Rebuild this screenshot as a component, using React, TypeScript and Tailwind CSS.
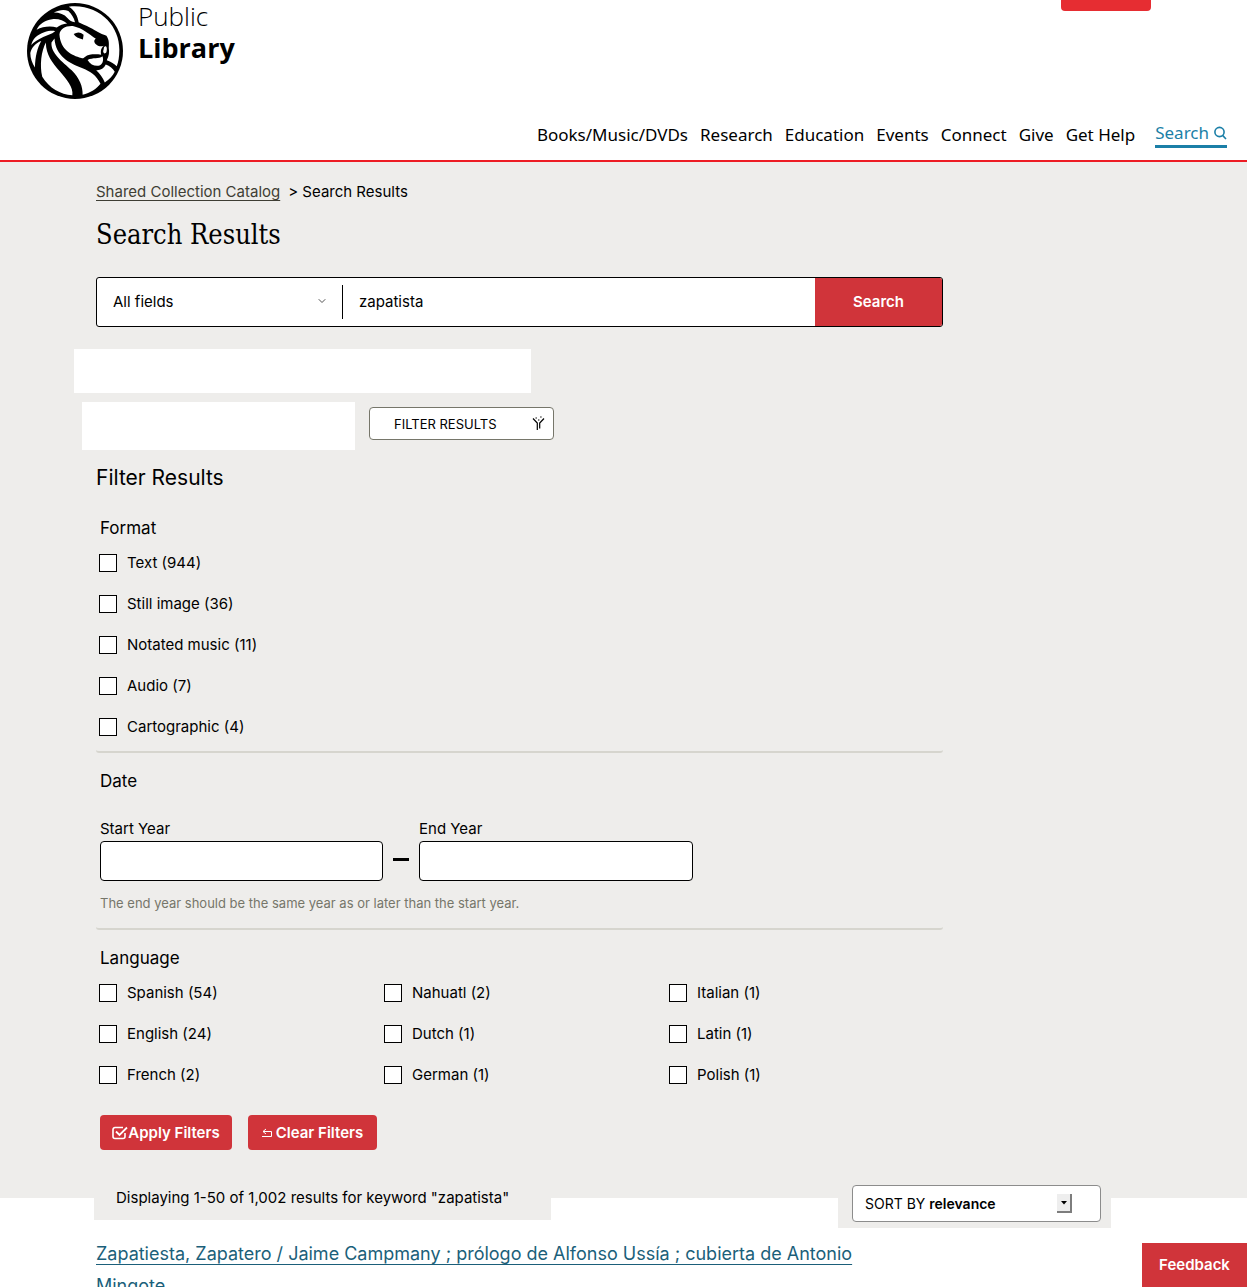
import React from "react";
import { ChevronDown } from "lucide-react";

const navItems = ["Books/Music/DVDs", "Research", "Education", "Events", "Connect", "Give", "Get Help"];
const formats = ["Text (944)", "Still image (36)", "Notated music (11)", "Audio (7)", "Cartographic (4)"];
const languages = [
  ["Spanish (54)", "English (24)", "French (2)"],
  ["Nahuatl (2)", "Dutch (1)", "German (1)"],
  ["Italian (1)", "Latin (1)", "Polish (1)"],
];

function LionLogo() {
  return (
    <svg viewBox="81 9 290 290" className="h-24 w-24 shrink-0" role="img" aria-label="Lion logo">
      <circle cx="226" cy="154" r="145" fill="#000" />
      <g fill="#fff">
        <path d="M207 20C300 10 361 80 360 150C360 172 357 188 352 200C345 193 335 187 322 182C329 168 330 158 328 145C329 130 329 120 321 108C300 101 290 93 272 84C258 76 247 72 237 67C234 48 225 30 207 20Z" />
        <path d="M162 38C178 30 192 28 206 33C216 42 223 54 226 67C216 66 210 62 203 54C194 44 180 38 162 38Z" />
        <path d="M110 90C118 72 135 61 157 58C176 56 192 62 202 71C190 72 180 77 171 83C152 78 128 80 110 90Z" />
        <path d="M94 136C97 118 112 104 133 97C146 93 158 92 166 94C155 104 142 105 130 112C114 120 100 128 94 136Z" />
        <path d="M91 160C95 144 107 130 124 124C112 145 106 170 105 204C97 192 91 176 91 160Z" />
        <path d="M138 128C124 155 119 195 127 232C148 266 182 286 218 288C222 262 200 240 180 215C158 190 138 165 138 128Z" />
        <path d="M155 128C152 160 187 185 216 212C240 236 250 262 249 286C272 281 292 268 303 253C292 228 272 215 247 205C208 190 168 170 164 116Z" />
        <path d="M179 104C181 87 198 77 222 79C248 85 268 102 289 117C282 121 283 129 291 135C298 141 306 141 313 138C304 145 303 155 305 165C290 164 268 162 256 172C251 176 250 177 245 175C216 167 182 150 179 104Z" />
        <path d="M314 142C321 135 324 145 321 157C317 164 312 162 311 155Z" />
        <path d="M264 181C280 173 298 179 309 170C314 182 308 196 300 198C286 201 272 195 264 181Z" />
        <path d="M319 195C331 199 341 207 346 217C340 230 330 240 316 249C310 235 302 222 290 212C303 213 313 207 319 195Z" />
      </g>
      <path d="M222 103Q238 93 252 105L250 119Q230 116 222 103Z" fill="#000" />
    </svg>
  );
}

function SearchGlyph() {
  return (
    <svg viewBox="0 0 14 14" className="h-3.5 w-3.5" fill="none" stroke="currentColor" strokeWidth="1.6" aria-hidden="true">
      <circle cx="6.5" cy="6" r="4.6" />
      <path d="M9.6 9.4L13 13" />
    </svg>
  );
}

function FilterGlyph() {
  return (
    <svg viewBox="0 0 13 15" className="h-[15px] w-[13px]" fill="none" stroke="#000" strokeWidth="1.2" aria-hidden="true">
      <path d="M1 2.5L5.3 7V14M12 2.5L7.7 7V12.5" />
      <path d="M3.5 2h1.4M8.2 1h1.4M6 4h1.4" />
    </svg>
  );
}

function CheckGlyph() {
  return (
    <svg viewBox="0 0 16 14" className="h-3.5 w-4" fill="none" stroke="#fff" strokeWidth="1.6" aria-hidden="true">
      <path d="M11 1.5H3A2 2 0 0 0 1 3.500V10.500A2 2 0 0 0 3 12.500H11A2 2 0 0 0 13 10.500V7" />
      <path d="M4 5.500L7.500 9L15 1.500" strokeWidth="1.8" />
    </svg>
  );
}

function UndoGlyph() {
  return (
    <svg viewBox="0 0 10 10" className="h-2.5 w-2.5" fill="none" stroke="#fff" strokeWidth="1" aria-hidden="true">
      <path d="M4 1L1 3.500L4 6M1 3.500H9.500V8.500H0" />
    </svg>
  );
}

function CheckItem({ label }: { label: string }) {
  return (
    <label className="flex h-[41px] items-center gap-2.5">
      <input type="checkbox" className="h-[18px] w-[18px] appearance-none border border-black bg-white checked:bg-black" />
      {label}
    </label>
  );
}

export default function App() {
  return (
    <div className="min-h-screen bg-white font-[Inter,sans-serif] text-[15px] leading-6 text-black">
      <header className="flex h-[162px] flex-col justify-between border-b-2 border-[#ed1c24]">
        <div className="flex items-start justify-between pl-[27px] pr-24">
          <a href="#" className="flex gap-[15px] font-['Open_Sans',sans-serif] leading-8">
            <span className="pt-[3px]"><LionLogo /></span>
            <span className="flex flex-col">
              <span className="text-[26px] leading-8 font-light">Public</span>
              <span className="text-[27px] leading-8 font-bold">Library</span>
            </span>
          </a>
          <div className="h-[11px] w-[90px] rounded-b-[4px] bg-[#e62d32]" />
        </div>
        <nav className="flex items-center justify-end gap-3 pb-3 pr-5 font-['Noto_Sans',sans-serif] text-[17px] leading-6">
          {navItems.map((n) => (
            <a key={n} href="#">{n}</a>
          ))}
          <a href="#" className="ml-2 flex items-center gap-1 border-b-[3px] border-[#1b7fa7] text-[#1b7fa7]">
            Search <SearchGlyph />
          </a>
        </nav>
      </header>

      <main>
        <div className="bg-[#eeedeb] pl-24 pr-4 pt-[18px] pb-12">
          <div className="max-w-[847px]">
            <nav aria-label="Breadcrumb" className="flex gap-2">
              <a href="#" className="text-[#3e3e34] underline underline-offset-[3px]">Shared Collection Catalog</a>
              <span>&gt; Search Results</span>
            </nav>
            <h1 className="mt-[11px] font-['DejaVu_Serif_Condensed','DejaVu_Serif',serif] text-[27px] leading-10">Search Results</h1>

            <form className="mt-[22px] flex h-[50px] overflow-hidden rounded-[3px] border border-black bg-white" onSubmit={(e) => e.preventDefault()}>
              <div className="relative my-[7px] w-[246px] shrink-0 border-r border-black">
                <select aria-label="Search field" className="h-full w-full appearance-none bg-transparent pl-4 outline-none">
                  <option>All fields</option>
                </select>
                <ChevronDown className="pointer-events-none absolute right-3.5 top-2.5 h-3 w-3 text-neutral-600" strokeWidth={2} />
              </div>
              <input aria-label="Search terms" defaultValue="zapatista" className="min-w-0 flex-1 px-4 outline-none" />
              <button className="w-[127px] bg-[#d0343a] font-semibold text-white">Search</button>
            </form>

            <div className="-ml-[22px] mt-[22px] h-11 w-[457px] bg-white" />
            <div className="-ml-3.5 mt-[9px] flex gap-3.5">
              <div className="h-12 w-[273px] bg-white" />
              <button className="mt-[5px] flex h-[33px] w-[185px] items-center justify-between rounded-[4px] border border-[#76766a] bg-white pl-6 pr-2 text-[13px]">
                FILTER RESULTS <FilterGlyph />
              </button>
            </div>

            <form onSubmit={(e) => e.preventDefault()}>
              <h2 className="mt-3 text-[21px] leading-8">Filter Results</h2>
              <fieldset className="mt-[22px] h-[237px] rounded-[3px] border-b-2 border-[#d6d5ce] pl-[3px]">
                <legend className="px-px pb-0.5 text-[17px] leading-6">Format</legend>
                {formats.map((f) => (
                  <CheckItem key={f} label={f} />
                ))}
              </fieldset>
              <fieldset className="mt-4 rounded-[3px] border-b-2 border-[#d6d5ce] pb-[15px] pl-1">
                <legend className="text-[17px] leading-6">Date</legend>
                <div className="mt-6 flex items-end">
                  <label className="w-[283px]">
                    <span className="block">Start Year</span>
                    <input type="text" className="block h-10 w-full rounded-[4px] border border-black bg-white px-3" />
                  </label>
                  <span className="mx-2.5 mb-5 h-[3px] w-4 bg-black" />
                  <label className="w-[274px]">
                    <span className="block">End Year</span>
                    <input type="text" className="block h-10 w-full rounded-[4px] border border-black bg-white px-3" />
                  </label>
                </div>
                <p className="mt-3 text-[13px] leading-5 text-[#76766a]">The end year should be the same year as or later than the start year.</p>
              </fieldset>
              <fieldset className="mt-4 pl-[3px]">
                <legend className="px-px pb-0.5 text-[17px] leading-6">Language</legend>
                <div className="flex">
                  {languages.map((col) => (
                    <div key={col[0]} className="w-[285px]">
                      {col.map((l) => (
                        <CheckItem key={l} label={l} />
                      ))}
                    </div>
                  ))}
                </div>
              </fieldset>
              <div className="mt-5 flex gap-4 pl-1 font-semibold text-white">
                <button className="flex h-[35px] w-[132px] items-center justify-center rounded-[4px] bg-[#d0343a]">
                  <CheckGlyph />Apply Filters
                </button>
                <button className="flex h-[35px] w-[129px] items-center justify-center gap-1 rounded-[4px] bg-[#d0343a]">
                  <UndoGlyph />Clear Filters
                </button>
              </div>
            </form>
          </div>
        </div>

        <div className="-mt-[22px] flex h-[52px] items-start justify-between pl-[94px] pr-[136px]">
          <p className="h-11 w-[457px] bg-[#eeedeb] px-[22px] pt-2.5">Displaying 1-50 of 1,002 results for keyword "zapatista"</p>
          <div className="h-[52px] w-[273px] bg-[#eeedeb] pl-3.5 pr-2.5 pt-[9px]">
            <button className="flex h-[37px] w-[249px] items-center rounded-[4px] border border-[#8c8c8c] bg-white pl-3 pr-7 text-sm">
              <span>SORT BY <strong className="font-semibold">relevance</strong></span>
              <span className="ml-auto flex h-[19px] w-[15px] items-center justify-center border-b-2 border-r-2 border-[#7d7d7d] bg-[#eeeeee]">
                <svg viewBox="0 0 6 4" className="h-1 w-1.5" aria-hidden="true"><path d="M0 0H6L3 3.500Z" fill="#000" /></svg>
              </span>
            </button>
          </div>
        </div>

        <section className="max-h-[59px] overflow-hidden pl-24 pr-4 pt-2.5">
          <h3 className="max-w-[800px] text-lg leading-8">
            <a href="#" className="text-[#1b5f7a] underline underline-offset-4">
              Zapatiesta, Zapatero / Jaime Campmany ; prólogo de Alfonso Ussía ; cubierta de Antonio Mingote
            </a>
          </h3>
        </section>
      </main>
      <button className="fixed bottom-0 right-0 h-11 w-[105px] bg-[#d0343a] font-semibold text-white">Feedback</button>
    </div>
  );
}
